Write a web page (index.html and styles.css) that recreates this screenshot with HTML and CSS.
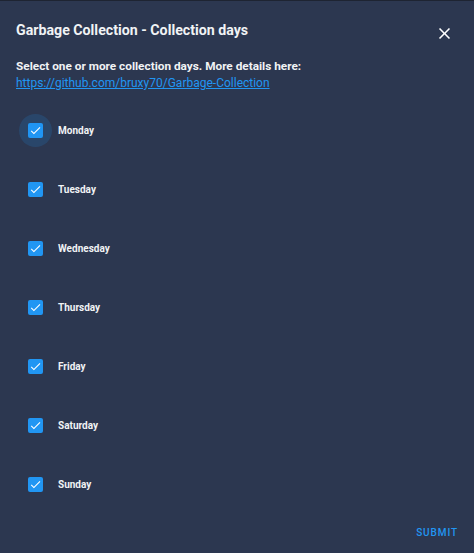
FILE: index.html
```html
<!DOCTYPE html>
<html>
<head>
<meta charset="utf-8">
<link rel="stylesheet" href="styles.css">
</head>
<body>
<div class="dialog">
  <div class="header">
    <h2 class="title">Garbage Collection - Collection days</h2>
    <button class="close" aria-label="Close">
      <svg viewBox="0 0 24 24" width="19" height="19"><path d="M19 6.41L17.59 5 12 10.59 6.41 5 5 6.41 10.59 12 5 17.59 6.41 19 12 13.41 17.59 19 19 17.59 13.41 12z" fill="#fff"/></svg>
    </button>
  </div>
  <div class="desc">
    <div class="desc-text">Select one or more collection days. More details here:</div>
    <a class="link" href="#">https://github.com/bruxy70/Garbage-Collection</a>
  </div>
  <div class="list">
    <label class="row"><span class="cb focus"><svg viewBox="0 0 24 24"><path d="M9 16.17L4.83 12l-1.42 1.41L9 19 21 7l-1.41-1.41z" fill="#fff"/></svg></span><span class="lbl">Monday</span></label>
    <label class="row"><span class="cb"><svg viewBox="0 0 24 24"><path d="M9 16.17L4.83 12l-1.42 1.41L9 19 21 7l-1.41-1.41z" fill="#fff"/></svg></span><span class="lbl">Tuesday</span></label>
    <label class="row"><span class="cb"><svg viewBox="0 0 24 24"><path d="M9 16.17L4.83 12l-1.42 1.41L9 19 21 7l-1.41-1.41z" fill="#fff"/></svg></span><span class="lbl">Wednesday</span></label>
    <label class="row"><span class="cb"><svg viewBox="0 0 24 24"><path d="M9 16.17L4.83 12l-1.42 1.41L9 19 21 7l-1.41-1.41z" fill="#fff"/></svg></span><span class="lbl">Thursday</span></label>
    <label class="row"><span class="cb"><svg viewBox="0 0 24 24"><path d="M9 16.17L4.83 12l-1.42 1.41L9 19 21 7l-1.41-1.41z" fill="#fff"/></svg></span><span class="lbl">Friday</span></label>
    <label class="row"><span class="cb"><svg viewBox="0 0 24 24"><path d="M9 16.17L4.83 12l-1.42 1.41L9 19 21 7l-1.41-1.41z" fill="#fff"/></svg></span><span class="lbl">Saturday</span></label>
    <label class="row"><span class="cb"><svg viewBox="0 0 24 24"><path d="M9 16.17L4.83 12l-1.42 1.41L9 19 21 7l-1.41-1.41z" fill="#fff"/></svg></span><span class="lbl">Sunday</span></label>
  </div>
  <div class="footer">
    <button class="submit">SUBMIT</button>
  </div>
</div>
</body>
</html>
```
FILE: styles.css
```css
html, body {
  margin: 0;
  padding: 0;
  height: 100%;
}
body {
  background: #2c3750;
  font-family: Roboto, "Liberation Sans", sans-serif;
  color: #e8eaed;
}
.dialog {
  box-sizing: border-box;
  height: 553px;
  border-top: 1px solid #1e2432;
  display: flex;
  flex-direction: column;
  padding: 0 16px;
}
.header {
  display: flex;
  align-items: flex-start;
  justify-content: space-between;
  padding-top: 19px;
}
.title {
  margin: 0;
  font-size: 14.2px;
  line-height: 20px;
  font-weight: 700;
  color: #f1f3f5;
}
.close {
  background: none;
  border: none;
  padding: 0;
  margin-top: 4px;
  margin-right: 4px;
  width: 19px;
  height: 19px;
  display: flex;
}
.desc {
  font-size: 12px;
  line-height: 17px;
  margin-top: 15px;
}
.desc-text {
  font-size: 11.8px;
  font-weight: 700;
  color: #f1f3f5;
}
.link {
  color: #2196f3;
  text-decoration: underline;
}
.list {
  display: flex;
  flex-direction: column;
  margin-top: 9px;
}
.row {
  display: flex;
  align-items: center;
  height: 59px;
}
.cb {
  position: relative;
  z-index: 0;
  box-sizing: border-box;
  width: 15px;
  height: 15px;
  margin-left: 12px;
  background: #2196f3;
  border-radius: 2px;
  display: flex;
  align-items: center;
  justify-content: center;
}
.cb svg {
  width: 13px;
  height: 13px;
}
.cb.focus::before {
  content: "";
  position: absolute;
  left: -9px;
  top: -9px;
  width: 33px;
  height: 33px;
  border-radius: 50%;
  background: rgba(33, 150, 243, 0.16);
  z-index: -1;
}
.lbl {
  margin-left: 15px;
  font-size: 10px;
  font-weight: 700;
  color: #f1f3f5;
}
.footer {
  display: flex;
  justify-content: flex-end;
  padding-top: 12px;
}
.submit {
  background: none;
  border: none;
  padding: 0;
  line-height: 14px;
  color: #2196f3;
  font-family: Roboto, "Liberation Sans", sans-serif;
  font-size: 10px;
  font-weight: 500;
  letter-spacing: 0.9px;
}
```
